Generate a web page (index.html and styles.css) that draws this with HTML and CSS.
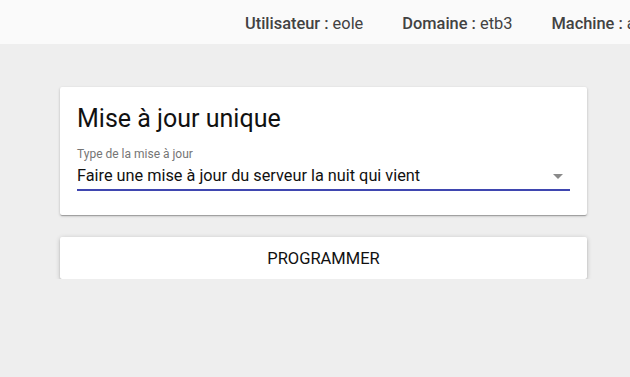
FILE: index.html
```html
<!DOCTYPE html>
<html lang="fr">
<head>
    <meta charset="UTF-8">
    <title>Mise à jour</title>
    <link rel="stylesheet" href="styles.css">
</head>
<body>
    <div class="topbar">
        <span class="info"><b>Utilisateur :</b> eole</span>
        <span class="info"><b>Domaine :</b> etb3</span>
        <span class="info"><b>Machine :</b> amon</span>
    </div>

    <div class="content">
        <div class="card">
            <h2>Mise à jour unique</h2>
            <label class="field-label">Type de la mise à jour</label>
            <div class="select">
                <span>Faire une mise à jour du serveur la nuit qui vient</span>
                <span class="arrow"></span>
            </div>
        </div>

        <button class="btn">PROGRAMMER</button>
    </div>
</body>
</html>
```

FILE: styles.css
```css
body {
    margin: 0;
    background: #eeeeee;
    font-family: Roboto, "Liberation Sans", sans-serif;
    overflow: hidden;
}

/* top bar with user info */
.topbar {
    background: #fafafa;
    height: 44px;
    box-sizing: border-box;
    padding-top: 3px;
    display: flex;
    align-items: center;
    padding-left: 245px;
    white-space: nowrap;
    font-size: 16.4px;
    color: #424242;
}
.info {
    margin-right: 39px;
}
.info b {
    font-weight: 500;
}

.content {
    padding: 43px 43px 0 60px;
}

.card {
    background: #fff;
    width: 527px;
    box-sizing: border-box;
    padding: 17px 17px 24px 17px;
    border-radius: 2px;
    box-shadow: 0 1px 3px rgba(0,0,0,0.2), 0 1px 1px rgba(0,0,0,0.14), 0 2px 1px -1px rgba(0,0,0,0.12);
}

.card h2 {
    margin: 0 0 13px 0;
    font-size: 25px;
    font-weight: 400;
    color: #111;
    line-height: 30px;
}

.field-label {
    display: block;
    font-size: 12px;
    color: #757575;
    line-height: 14px;
}

.select {
    display: flex;
    justify-content: space-between;
    align-items: center;
    font-size: 16.3px;
    color: #111;
    line-height: 20px;
    padding: 5px 0 3px 0;
    border-bottom: 2px solid #3f46b0;
}

.arrow {
    width: 0;
    height: 0;
    border-left: 5px solid transparent;
    border-right: 5px solid transparent;
    border-top: 5px solid #8a8a8a;
    margin-right: 7px;
}

.btn {
    display: block;
    margin-top: 22px;
    width: 527px;
    height: 42px;
    background: #fff;
    border: none;
    border-radius: 2px;
    font-family: Roboto, "Liberation Sans", sans-serif;
    font-size: 16.5px;
    color: #111;
    box-shadow: 0 1px 5px rgba(0,0,0,0.2), 0 2px 2px rgba(0,0,0,0.14), 0 3px 1px -2px rgba(0,0,0,0.12);
}
```
